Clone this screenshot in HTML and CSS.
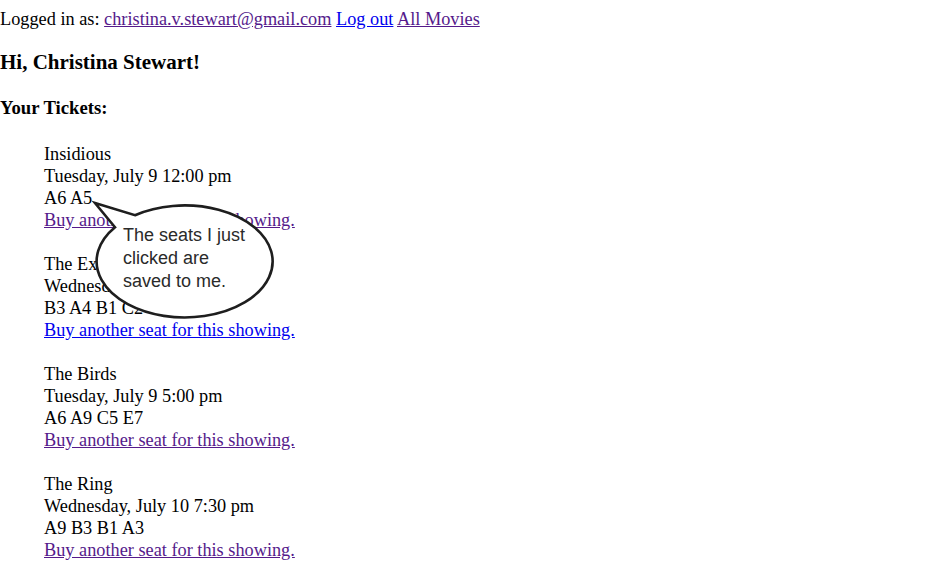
FILE: index.html
```html
<!DOCTYPE html>
<html>
<head>
<meta charset="utf-8">
<title>Your Tickets</title>
<link rel="stylesheet" href="styles.css">
</head>
<body>
<div class="page">
  <div class="topbar">Logged in as: <a class="visited" href="#">christina.v.stewart@gmail.com</a> <a href="#">Log out</a> <a class="visited" href="#">All Movies</a></div>
  <h2 class="greeting">Hi, Christina Stewart!</h2>
  <h3 class="section">Your Tickets:</h3>
  <ul class="tickets">
    <li class="ticket">
      <div>Insidious</div>
      <div>Tuesday, July 9 12:00 pm</div>
      <div>A6 A5</div>
      <a class="visited" href="#">Buy another seat for this showing.</a>
    </li>
    <li class="ticket">
      <div>The Exorcist</div>
      <div>Wednesday, July 10 9:00 pm</div>
      <div>B3 A4 B1 C2</div>
      <a href="#">Buy another seat for this showing.</a>
    </li>
    <li class="ticket">
      <div>The Birds</div>
      <div>Tuesday, July 9 5:00 pm</div>
      <div>A6 A9 C5 E7</div>
      <a class="visited" href="#">Buy another seat for this showing.</a>
    </li>
    <li class="ticket">
      <div>The Ring</div>
      <div>Wednesday, July 10 7:30 pm</div>
      <div>A9 B3 B1 A3</div>
      <a class="visited" href="#">Buy another seat for this showing.</a>
    </li>
  </ul>
</div>
<div class="bubble">
  <svg class="bubble-shape" width="200" height="140" viewBox="0 0 200 140">
    <path d="M 10 13 L 50 25.2 A 88 56 0 1 1 30 37.2 Z" fill="#fff" stroke="#1e1e1e" stroke-width="2.6" stroke-linejoin="miter"/>
  </svg>
  <div class="bubble-text">The seats I just<br>clicked are<br>saved to me.</div>
</div>
</body>
</html>
```

FILE: styles.css
```css
html, body {
  margin: 0;
  padding: 0;
  background: #fff;
}
body {
  font-family: "Liberation Serif", "Times New Roman", serif;
  font-size: 18.3px;
  line-height: 22px;
  color: #000;
}
.page {
  padding-top: 8px;
}
a {
  color: #0000ee;
  text-decoration: underline;
}
a.visited {
  color: #551a8b;
}
.greeting {
  font-size: 21px;
  line-height: 24px;
  margin: 20px 0 0 0;
  font-weight: bold;
}
.section {
  font-size: 18.7px;
  line-height: 22px;
  margin: 23px 0 0 0;
  font-weight: bold;
}
.tickets {
  list-style: none;
  margin: 24px 0 0 0;
  padding: 0 0 0 44px;
  display: flex;
  flex-direction: column;
  gap: 22px;
}
.bubble {
  position: absolute;
  left: 85px;
  top: 190px;
  width: 200px;
  height: 140px;
}
.bubble-shape {
  position: absolute;
  left: 0;
  top: 0;
}
.bubble-text {
  position: absolute;
  left: 38px;
  top: 34px;
  font-family: "Liberation Sans", Arial, sans-serif;
  font-size: 18px;
  line-height: 23px;
  color: #2a2a2a;
}
```
